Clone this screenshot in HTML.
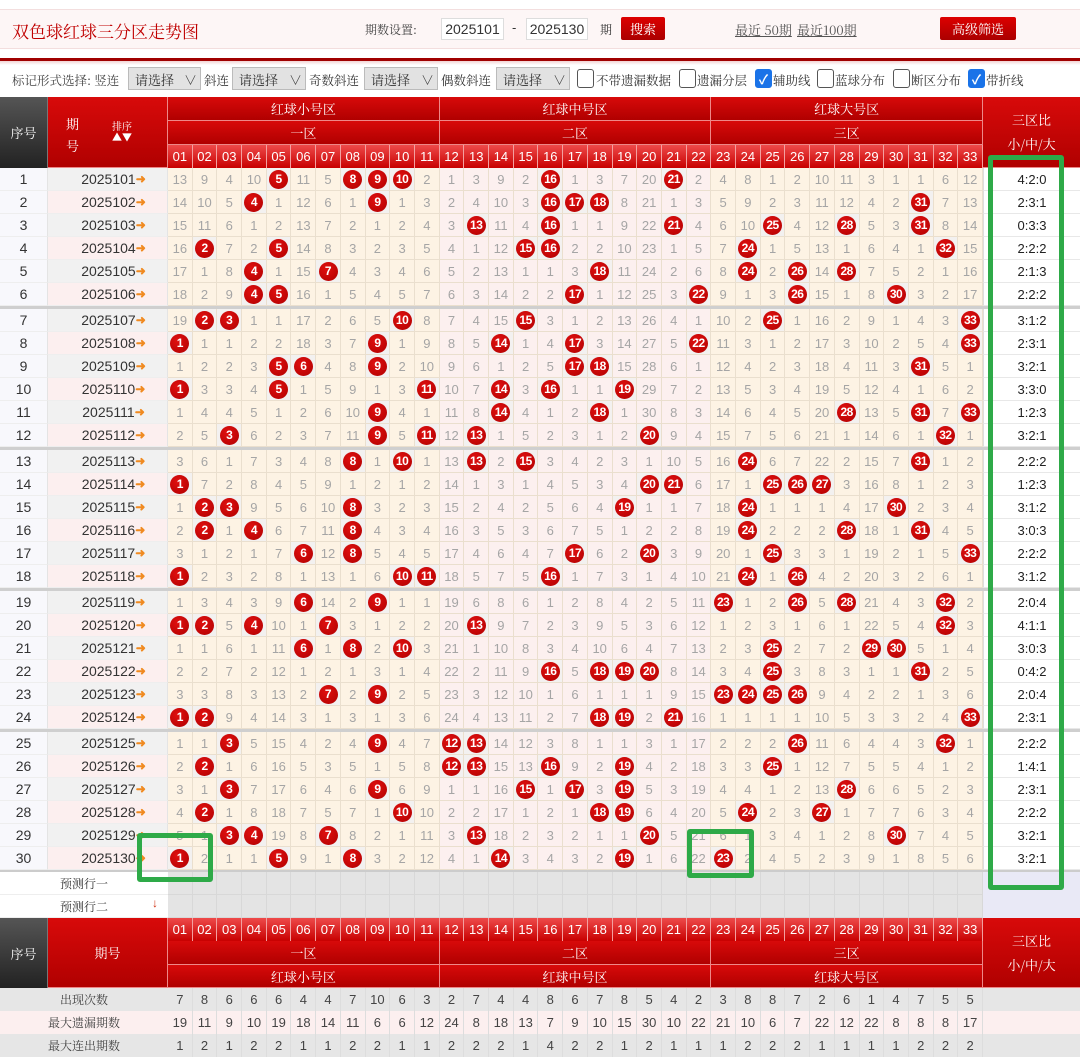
<!DOCTYPE html>
<html><head><meta charset="utf-8">
<style>
*{margin:0;padding:0;box-sizing:border-box}
body{width:1080px;height:1042px;overflow:hidden;background:#fff;position:relative;font-family:"Liberation Sans","Noto Sans CJK SC",sans-serif;color:#333}
.a{position:absolute}
.k{font-family:"Noto Serif CJK SC","Liberation Serif",serif}
.c{display:flex;align-items:center;justify-content:center;text-align:center}
.n{font-family:"Liberation Sans Narrow","Liberation Sans",sans-serif}
.hdr{background:linear-gradient(#d80a0a,#b00000);color:#fff;border-right:1px solid #e88;border-bottom:1px solid #e88}
.hn{background:linear-gradient(#ee4a4a,#c80000);color:#fff;border-right:1px solid #f3a0a0;font-size:13px}
.cell{border-right:1px solid #eadfce;border-bottom:1px solid #eadfce;font-size:13px;color:#a5a5a5}
.ball{width:19px;height:19px;border-radius:50%;background:radial-gradient(circle at 40% 35%,#e01010,#b00000);color:#fff;font-size:12px;font-weight:bold;letter-spacing:-0.5px}
.gr{border:5px solid #2eaa48;border-radius:3px}
.sel{background:#e2e2e2;border:1px solid #bbb;font-size:13px;height:23px;top:67px}
.cb{width:17px;height:19px;border:1px solid #555;border-radius:3px;background:#fff;top:69px}
.cbk{background:#1a73e8;border-color:#1a73e8;color:#fff;font-size:13px;font-weight:bold}
</style></head><body>
<!-- top bar -->
<div class="a" style="left:0;top:9px;width:1080px;height:40px;background:#fdf6f6;border-top:1px solid #f3dede;border-bottom:1px solid #f3dede"></div>
<div class="a k" style="left:12px;top:18px;font-size:17px;color:#c00000">双色球红球三分区走势图</div>
<div class="a k" style="left:365px;top:21px;font-size:12px;color:#444">期数设置:</div>
<div class="a c n" style="left:441px;top:18px;width:63px;height:22px;border:1px solid #ddd;background:#fff;font-size:14px">2025101</div>
<div class="a" style="left:512px;top:20px;font-size:13px">-</div>
<div class="a c n" style="left:526px;top:18px;width:62px;height:22px;border:1px solid #ddd;background:#fff;font-size:14px">2025130</div>
<div class="a k" style="left:600px;top:21px;font-size:12px">期</div>
<div class="a c k" style="left:621px;top:17px;width:44px;height:23px;background:linear-gradient(#d00,#a00);color:#fff;font-size:13px;border-radius:2px">搜索</div>
<div class="a k" style="left:735px;top:20px;font-size:13px;color:#555;text-decoration:underline">最近 50期</div>
<div class="a k" style="left:797px;top:20px;font-size:13px;color:#555;text-decoration:underline">最近100期</div>
<div class="a c k" style="left:940px;top:17px;width:76px;height:23px;background:linear-gradient(#d00,#a00);color:#fff;font-size:13px;border-radius:2px">高级筛选</div>
<div class="a" style="left:0;top:58px;width:1080px;height:3px;background:#a00000"></div>
<div class="a" style="left:0;top:61px;width:1080px;height:4px;background:linear-gradient(#f3d4d4,#fff)"></div>
<!-- filter row -->
<div class="a k" style="left:12px;top:71px;font-size:12.5px;color:#444">标记形式选择: 竖连</div>
<div class="a sel k" style="left:128px;width:73px;padding:2px 0 0 6px">请选择 <span style="float:right;margin-right:3px">∨</span></div>
<div class="a k" style="left:204px;top:71px;font-size:12.5px">斜连</div>
<div class="a sel k" style="left:232px;width:74px;padding:2px 0 0 6px">请选择 <span style="float:right;margin-right:3px">∨</span></div>
<div class="a k" style="left:309px;top:71px;font-size:12.5px">奇数斜连</div>
<div class="a sel k" style="left:364px;width:74px;padding:2px 0 0 6px">请选择 <span style="float:right;margin-right:3px">∨</span></div>
<div class="a k" style="left:441px;top:71px;font-size:12.5px">偶数斜连</div>
<div class="a sel k" style="left:496px;width:74px;padding:2px 0 0 6px">请选择 <span style="float:right;margin-right:3px">∨</span></div>
<div class="a cb" style="left:577px"></div><div class="a k" style="left:596px;top:71px;font-size:12.5px">不带遗漏数据</div>
<div class="a cb" style="left:679px"></div><div class="a k" style="left:697px;top:71px;font-size:12.5px">遗漏分层</div>
<div class="a cb cbk c" style="left:755px">✓</div><div class="a k" style="left:773px;top:71px;font-size:12.5px">辅助线</div>
<div class="a cb" style="left:817px"></div><div class="a k" style="left:835px;top:71px;font-size:12.5px">蓝球分布</div>
<div class="a cb" style="left:893px"></div><div class="a k" style="left:911px;top:71px;font-size:12.5px">断区分布</div>
<div class="a cb cbk c" style="left:968px">✓</div><div class="a k" style="left:986px;top:71px;font-size:12.5px">带折线</div>
<div id="t"></div>
<script>
var X0=168,CW=(983-168)/33,H='';
function d(cls,x,y,w,h,txt,st){H+='<div class="a '+cls+'" style="left:'+x+'px;top:'+y+'px;width:'+w+'px;height:'+h+'px;'+(st||'')+'">'+(txt||'')+'</div>';}
function cx(i){return X0+i*CW;}
function ry(r){return 168+r*23+Math.floor(r/6)*3;}
function p2(i){return (i<10?'0':'')+i;}
var zn=['红球小号区','红球中号区','红球大号区'],zq=['一区','二区','三区'];
// top header
d('c k',0,97,48,71,'序号','background:linear-gradient(#555,#222);color:#fff;font-size:13px;border-right:1px solid #777');
d('hdr k',48,97,120,71,'','border-right:1px solid #e88');
H+='<div class="a k" style="left:66px;top:113px;color:#fff;font-size:13px;line-height:22px">期<br>号</div>';
H+='<div class="a k" style="left:112px;top:120px;color:#fff;font-size:10px;line-height:11px;text-align:center">排序<br>▲▼</div>';
for(var z=0;z<3;z++){
 d('hdr c k',cx(z*11),97,11*CW,24,zn[z],'font-size:13px');
 d('hdr c k',cx(z*11),121,11*CW,24,zq[z],'font-size:13px');
}
for(var i=0;i<33;i++)d('hn c n',cx(i),145,CW,23,p2(i+1));
d('hdr c k',983,97,97,71,'三区比<br>小/中/大','font-size:13px;line-height:24px;border-right:none');
// data
var hits=[[5,8,9,10,16,21],[4,9,16,17,18,31],[13,16,21,25,28,31],[2,5,15,16,24,32],[4,7,18,24,26,28],[4,5,17,22,26,30],
[2,3,10,15,25,33],[1,9,14,17,22,33],[5,6,9,17,18,31],[1,5,11,14,16,19],[9,14,18,28,31,33],[3,9,11,13,20,32],
[8,10,13,15,24,31],[1,20,21,25,26,27],[2,3,8,19,24,30],[2,4,8,24,28,31],[6,8,17,20,25,33],[1,10,11,16,24,26],
[6,9,23,26,28,32],[1,2,4,7,13,32],[6,8,10,25,29,30],[16,18,19,20,25,31],[7,9,23,24,25,26],[1,2,18,19,21,33],
[3,9,12,13,26,32],[2,12,13,16,19,25],[3,9,15,17,19,28],[2,10,18,19,24,27],[3,4,7,13,20,30],[1,5,8,14,19,23]];
var v=[13,9,4,10,0,11,5,0,0,0,2,1,3,9,2,0,1,3,7,20,0,2,4,8,1,2,10,11,3,1,1,6,12];
var cur=v.slice();
for(var r=0;r<30;r++){
 var y=ry(r),h=hits[r];
 if(r>0)for(var i=0;i<33;i++)cur[i]=cur[i]+1;
 d('c',0,y,48,23,''+(r+1),'background:#f8f8fc;border-right:1px solid #e4e4e4;border-bottom:1px solid #eee;font-size:14px');
 d('c n',48,y,120,23,'2025'+(101+r)+'<span style="color:#f08a20;font-weight:bold;font-size:12px">➜</span>','background:'+(r%2?'#fcefef':'#f1f1f1')+';border-right:1px solid #e4e4e4;border-bottom:1px solid #eee;font-size:14px;color:#333;padding-left:12px');
 var cnt=[0,0,0];
 for(var i=0;i<33;i++){
  var z=Math.floor(i/11),bg=z==1?'#fcf0ef':'#fdf3e4';
  if(h.indexOf(i+1)>=0){cnt[z]++;cur[i]=0;
   d('cell c n',cx(i),y,CW,23,'<div class="ball c n">'+p2(i+1).replace(/^0/,'')+'</div>','background:#f3f1f0');
  } else d('cell c n',cx(i),y,CW,23,''+cur[i],'background:'+bg);
 }
 d('c n',983,y,97,23,cnt.join(':'),'background:#fff;border-bottom:1px solid #e8e8e8;border-left:1px solid #ddd;font-size:13px;color:#222');
}
for(var g=1;g<5;g++)d('',0,ry(g*6)-3,1080,3,'','background:#cfcfcf');
d('',0,ry(29)+23,1080,2,'','background:#ccc');
// predict rows
for(var k=0;k<2;k++){var y=872+k*23;
 d('c k',0,y,168,23,k?'预测行二':'预测行一','background:#fff;font-size:12px;border-bottom:1px solid #eee');
 for(var i=0;i<33;i++)d('',cx(i),y,CW,23,'','background:#e4e4e4;border-right:1px solid #d8d8d8;border-bottom:1px solid #d8d8d8');
 d('',983,y,97,23,'','background:#e9e9f6');
}
H+='<div class="a" style="left:152px;top:896px;color:#d03010;font-size:12px;font-weight:bold">↓</div>';
// bottom header
var by=918;
d('c k',0,by,48,70,'序号','background:linear-gradient(#555,#222);color:#fff;font-size:13px;border-right:1px solid #777');
d('hdr c k',48,by,120,70,'期号','font-size:13px');
for(var i=0;i<33;i++)d('hn c n',cx(i),by,CW,23,p2(i+1));
for(var z=0;z<3;z++){
 d('hdr c k',cx(z*11),by+23,11*CW,24,zq[z],'font-size:13px');
 d('hdr c k',cx(z*11),by+47,11*CW,23,zn[z],'font-size:13px');
}
d('hdr c k',983,by,97,70,'三区比<br>小/中/大','font-size:13px;line-height:24px;border-right:none');
var s1=[7,8,6,6,6,4,4,7,10,6,3,2,7,4,4,8,6,7,8,5,4,2,3,8,8,7,2,6,1,4,7,5,5];
var s2=[19,11,9,10,19,18,14,11,6,6,12,24,8,18,13,7,9,10,15,30,10,22,21,10,6,7,22,12,22,8,8,8,17];
var s3=[1,2,1,2,2,1,1,2,2,1,1,2,2,2,1,4,2,2,1,2,1,1,1,2,2,2,1,1,1,1,2,2,2];
var rows=[['出现次数',s1,'#e6e6e6'],['最大遗漏期数',s2,'#fcefef'],['最大连出期数',s3,'#e6e6e6']];
for(var k=0;k<3;k++){var y=988+k*23;
 d('c k',0,y,168,23,rows[k][0],'background:'+rows[k][2]+';font-size:12px;color:#444');
 for(var i=0;i<33;i++)d('c n',cx(i),y,CW,23,''+rows[k][1][i],'background:'+rows[k][2]+';border-right:1px solid #ddd;font-size:13px;color:#444');
 d('',983,y,97,23,'','background:'+rows[k][2]);
}
// green annotation boxes
d('gr',988,155,76,735);
d('gr',137,833,76,49);
d('gr',687,829,67,49);
document.getElementById('t').innerHTML=H;
</script>
</body></html>
